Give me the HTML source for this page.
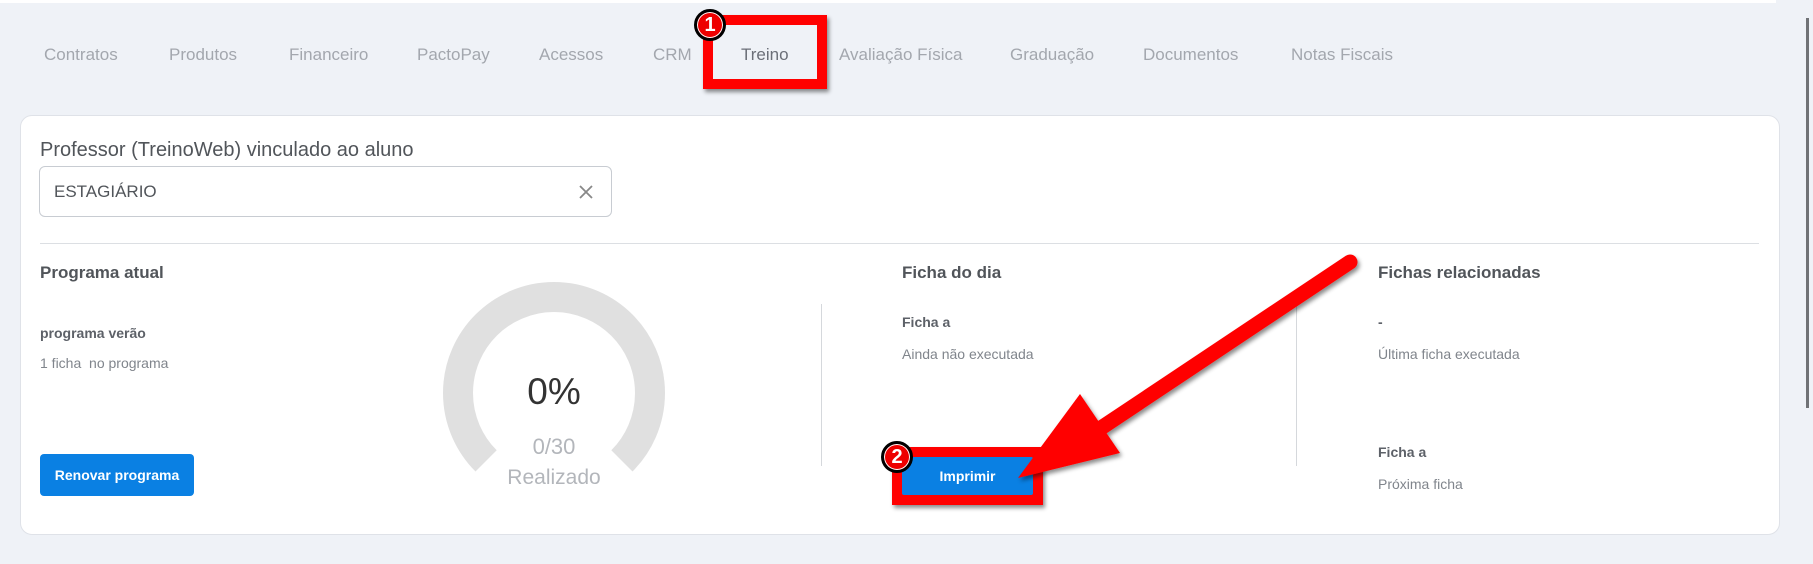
<!DOCTYPE html>
<html><head><meta charset="utf-8"><style>
*{margin:0;padding:0;box-sizing:border-box}
body{width:1813px;height:564px;background:#eff2f7;font-family:"Liberation Sans",sans-serif;position:relative;overflow:hidden;color:#51555a}
.a{position:absolute;white-space:nowrap}
.tab{position:absolute;top:45px;font-size:17px;color:#a3a7ae}
.card{position:absolute;left:20px;top:115px;width:1760px;height:420px;background:#fff;border:1px solid #dfe2e8;border-radius:12px}
.h{font-size:17px;font-weight:bold;color:#51555a}
.sm{font-size:14px;color:#80858c}
.smb{font-size:14px;font-weight:bold;color:#5d6168}
.btn{position:absolute;background:#0a80e3;color:#fff;font-weight:bold;font-size:14px;border-radius:4px;display:flex;align-items:center;justify-content:center}
.badge{position:absolute;width:32px;height:32px;border-radius:50%;background:#e00;border:3px solid #000;color:#fff;font-weight:bold;font-size:20px;display:flex;align-items:center;justify-content:center;box-shadow:0 0 0 1px #fff inset}
</style></head><body>
<div class="a" style="left:0;top:0;width:1776px;height:3px;background:#fff"></div>
<div class="a" style="left:1806px;top:18px;width:3px;height:390px;background:#707276"></div>
<div class="tab" style="left:44px">Contratos</div>
<div class="tab" style="left:169px">Produtos</div>
<div class="tab" style="left:289px">Financeiro</div>
<div class="tab" style="left:417px">PactoPay</div>
<div class="tab" style="left:539px">Acessos</div>
<div class="tab" style="left:653px">CRM</div>
<div class="tab" style="left:741px;color:#6b6f78">Treino</div>
<div class="tab" style="left:839px">Avaliação Física</div>
<div class="tab" style="left:1010px">Graduação</div>
<div class="tab" style="left:1143px">Documentos</div>
<div class="tab" style="left:1291px">Notas Fiscais</div>
<div class="a" style="left:703px;top:15px;width:124px;height:74px;border:10px solid #f00;box-shadow:2px 3px 4px rgba(0,0,0,.45)"></div>
<div class="badge" style="left:694px;top:9px">1</div>

<div class="card"></div>
<div class="a" style="left:40px;top:139px;font-size:20px;color:#51555a">Professor (TreinoWeb) vinculado ao aluno</div>
<div class="a" style="left:39px;top:166px;width:573px;height:51px;border:1px solid #c8ccd2;border-radius:6px"></div>
<div class="a" style="left:54px;top:182px;font-size:17px;color:#51555a">ESTAGIÁRIO</div>
<svg class="a" style="left:578px;top:184px" width="16" height="16"><path d="M2 2L14 14M14 2L2 14" stroke="#888" stroke-width="1.8"/></svg>
<div class="a" style="left:40px;top:243px;width:1719px;height:1px;background:#dcdfe3"></div>

<div class="a h" style="left:40px;top:263px">Programa atual</div>
<div class="a smb" style="left:40px;top:325px">programa verão</div>
<div class="a sm" style="left:40px;top:355px">1 ficha&nbsp; no programa</div>
<div class="btn" style="left:40px;top:454px;width:154px;height:42px">Renovar programa</div>

<svg class="a" style="left:430px;top:270px" width="250" height="250">
<path d="M 56.1 190.9 A 96 96 0 1 1 191.9 190.9" fill="none" stroke="#e0e0e0" stroke-width="30"/>
</svg>
<div class="a" style="left:454px;top:371px;width:200px;text-align:center;font-size:37px;color:#333">0%</div>
<div class="a" style="left:454px;top:434px;width:200px;text-align:center;font-size:22px;color:#b3b6bb">0/30</div>
<div class="a" style="left:454px;top:466px;width:200px;text-align:center;font-size:21px;color:#b3b6bb">Realizado</div>

<div class="a" style="left:821px;top:304px;width:1px;height:162px;background:#d5d8dc"></div>
<div class="a" style="left:1296px;top:304px;width:1px;height:162px;background:#d5d8dc"></div>

<div class="a h" style="left:902px;top:263px">Ficha do dia</div>
<div class="a smb" style="left:902px;top:314px">Ficha a</div>
<div class="a sm" style="left:902px;top:346px">Ainda não executada</div>

<div class="a h" style="left:1378px;top:263px">Fichas relacionadas</div>
<div class="a smb" style="left:1378px;top:314px">-</div>
<div class="a sm" style="left:1378px;top:346px">Última ficha executada</div>
<div class="a smb" style="left:1378px;top:444px">Ficha a</div>
<div class="a sm" style="left:1378px;top:476px">Próxima ficha</div>

<div class="a" style="left:892px;top:447px;width:151px;height:58px;background:#f00;box-shadow:2px 3px 4px rgba(0,0,0,.45)"></div>
<div class="btn" style="left:902px;top:457px;width:131px;height:38px;border-radius:2px">Imprimir</div>
<div class="badge" style="left:881px;top:441px">2</div>

<svg class="a" style="left:0;top:0" width="1813" height="564">
<defs><filter id="s"><feDropShadow dx="2" dy="3" stdDeviation="2" flood-opacity=".45"/></filter></defs>
<g filter="url(#s)">
<line x1="1350" y1="262" x2="1095" y2="432" stroke="#f00" stroke-width="15" stroke-linecap="round"/>
<polygon points="1080,394 1120,453 1018,478" fill="#f00"/>
</g>
</svg>
</body></html>
